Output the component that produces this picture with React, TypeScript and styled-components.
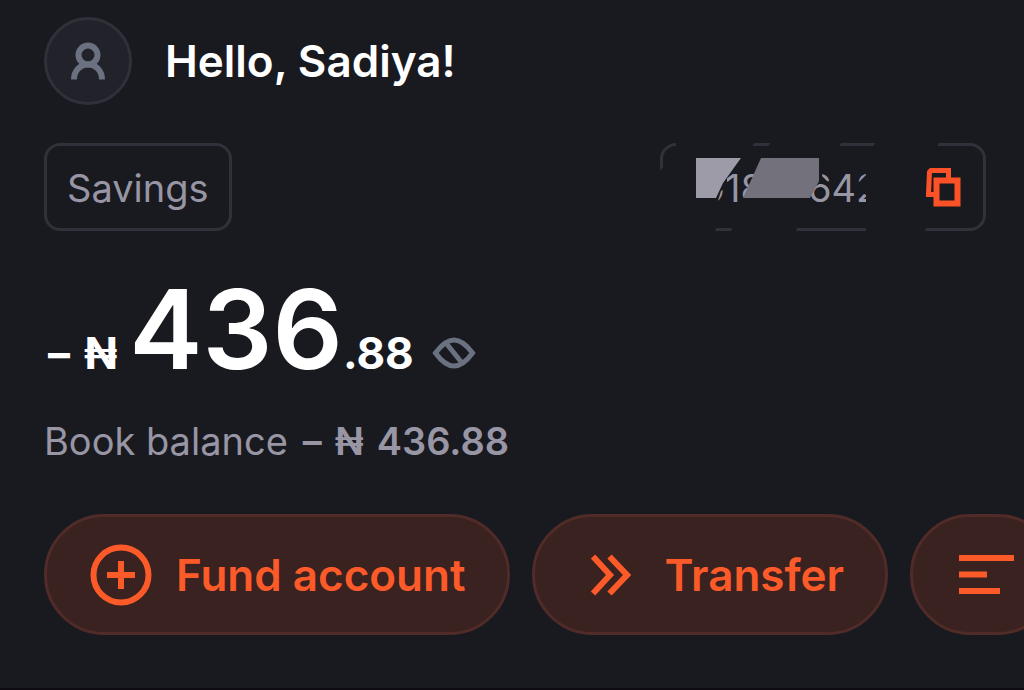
import React from 'react';
import styled, { createGlobalStyle } from 'styled-components';

const GlobalStyle = createGlobalStyle`
  * { box-sizing: border-box; }
  body {
    margin: 0;
    background: #191a20;
    color: #ffffff;
    font-family: Inter, 'Liberation Sans', sans-serif;
    overflow-x: hidden;
  }
  button { font: inherit; cursor: pointer; }
`;

const Page = styled.main`
  display: flex;
  flex-direction: column;
  min-height: 100vh;
  padding-top: 17px;
  border-bottom: 2px solid #0e0c12;
  overflow: hidden;
`;

const Header = styled.header`
  display: flex;
  align-items: center;
  gap: 33px;
  padding: 0 44px;
`;

const Avatar = styled.button`
  display: flex;
  align-items: center;
  justify-content: center;
  width: 88px;
  height: 88px;
  padding: 0;
  border: 3px solid #2f3039;
  border-radius: 50%;
  background: #22232a;
`;

const Greeting = styled.h1`
  margin: 0;
  font-size: 44px;
  line-height: 56px;
  font-weight: 600;
`;

const AccountRow = styled.section`
  display: flex;
  justify-content: space-between;
  margin-top: 38px;
  padding: 0 38px 0 44px;
`;

const Tag = styled.div`
  display: flex;
  align-items: center;
  height: 88px;
  padding: 2px 20px 0;
  border: 3px solid #30313a;
  border-radius: 16px;
  color: #9896a4;
  font-size: 38px;
  line-height: 48px;
`;

const AccountNumber = styled(Tag)`
  position: relative;
  width: 326px;
  justify-content: space-between;
  padding: 2px 21px 0 38px;
`;

const Digits = styled.span`
  display: flex;
  gap: 44px;
`;

const Redaction = styled.svg`
  position: absolute;
  top: -3px;
  left: -3px;
  pointer-events: none;
`;

const IconButton = styled.button`
  display: flex;
  padding: 0;
  border: 0;
  background: none;
`;

const Balance = styled.section`
  display: flex;
  align-items: baseline;
  margin-top: 42px;
  padding: 0 48px;
  font-weight: 600;
  line-height: 112px;
`;

const Small = styled.span`
  font-size: 44px;
  font-weight: 700;
`;

const Currency = styled(Small)`
  display: flex;
  gap: 14px;
`;

const Large = styled.span`
  margin-left: 12px;
  font-size: 110px;
`;

const EyeButton = styled(IconButton)`
  margin-left: 18px;
`;

const BookBalance = styled.p`
  display: flex;
  gap: 15px;
  margin: 8px 0 0;
  padding: 0 44px;
  color: #9896a4;
  font-size: 38px;
  line-height: 48px;
`;

const Amount = styled.strong`
  display: flex;
  gap: 13px;
  font-weight: 600;
`;

const Actions = styled.nav`
  display: flex;
  gap: 22px;
  margin-top: 49px;
  padding-left: 44px;
`;

const Action = styled.button<{ $pad: number; $gap: number }>`
  display: flex;
  flex: none;
  align-items: center;
  gap: ${(p) => p.$gap}px;
  height: 121px;
  padding: 0 41px 0 ${(p) => p.$pad}px;
  border: 3px solid #502b28;
  border-radius: 61px;
  background: #392220;
  color: #fd5a2a;
  font-size: 44px;
  line-height: 56px;
  font-weight: 600;
`;

const mask = '#191a20';

export default function App() {
  return (
    <>
      <GlobalStyle />
      <Page>
        <Header>
          <Avatar aria-label="Profile">
            <svg width="34" height="38" viewBox="0 0 34 38" fill="none" stroke="#6c7181" strokeWidth="6">
              <circle cx="17" cy="13" r="9.5" />
              <path d="M3 37.500C3 29 9 22.500 17 22.500S31 29 31 37.500" />
            </svg>
          </Avatar>
          <Greeting>Hello, Sadiya!</Greeting>
        </Header>

        <AccountRow>
          <Tag>Savings</Tag>
          <AccountNumber>
            <Digits>
              <span>018</span>
              <span>642</span>
            </Digits>
            <Redaction width="326" height="88" viewBox="0 0 326 88" aria-hidden="true">
              <g fill={mask}>
                <path d="M16 0H94L92 4H16ZM110 0H181L179 4H108ZM215 0H279L277 4H213Z" />
                <path d="M0 28L5 22V66L20 70V88H0ZM18 83H57L55 88H18ZM73 83H138L136 88H71ZM206 83H267L265 88H206Z" />
                <path d="M206 15H240V70H206ZM198 40L206 32V52L198 48Z" />
                <path d="M30 15H81L67 33V45L61 48L56 64H30Z" />
                <path d="M146 15H165L162 33L170 41H159L152 46ZM82 54H104V64H82Z" />
              </g>
              <path fill="#9d9ba8" d="M36 15H81L63 40L56 55H36Z" />
              <path fill="#72717c" d="M101 15H159V38L150 55H83Z" />
            </Redaction>
            <IconButton aria-label="Copy account number">
              <svg width="36" height="40" viewBox="0 1 36 40" fill="none" stroke="#fd5227" strokeWidth="5">
                <path d="M22.500 11V3.500H5L3.500 5L2.500 27.500H9" />
                <rect x="10.500" y="13.500" width="21" height="23" strokeWidth="6" />
              </svg>
            </IconButton>
          </AccountNumber>
        </AccountRow>

        <Balance>
          <Currency>
            <span>–</span>
            <span>₦</span>
          </Currency>
          <Large>436</Large>
          <Small>.88</Small>
          <EyeButton aria-label="Hide balance">
            <svg width="44" height="32" viewBox="0 0 44 32" fill="none" stroke="#6a7180" strokeWidth="5">
              <path d="M3.500 16C10 7 16 3 22 3S34 7 40.500 16C34 25 28 29 22 29S10 25 3.500 16Z" />
              <path d="M14 6L30 26" />
            </svg>
          </EyeButton>
        </Balance>

        <BookBalance>
          <span>Book balance</span>
          <Amount>
            <span>–</span>
            <span>₦</span>
            <span>436.88</span>
          </Amount>
        </BookBalance>

        <Actions>
          <Action $pad={43} $gap={24}>
            <svg width="62" height="62" viewBox="0 0 62 62" fill="none" stroke="currentColor" strokeWidth="6">
              <circle cx="31" cy="31" r="27.500" />
              <path d="M31 17V45M17 31H45" />
            </svg>
            Fund account
          </Action>
          <Action $pad={54} $gap={34}>
            <svg width="42" height="42" viewBox="0 0 42 42" fill="none" stroke="currentColor" strokeWidth="6">
              <path d="M4 2.500L21 21L4 39.500M20.500 2.500L38 21L20.500 39.500" />
            </svg>
            Transfer
          </Action>
          <Action $pad={46} $gap={28} aria-label="Transactions">
            <svg width="55" height="40" viewBox="0 0 55 40" fill="currentColor">
              <path d="M0 0H55V6H0ZM0 16.500H28V22.500H0ZM0 33H41V39H0Z" />
            </svg>
          </Action>
        </Actions>
      </Page>
    </>
  );
}
